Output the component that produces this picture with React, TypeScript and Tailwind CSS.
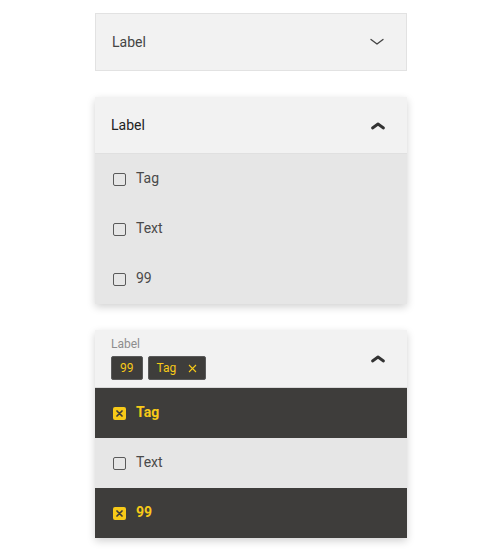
import React from "react";

const ChevronDown = () => (
  <svg width="14" height="8" viewBox="0 0 14 8" fill="none">
    <path d="M1 1.5 L7 6 L13 1.5" stroke="#444" strokeWidth="1.3" strokeLinecap="round" strokeLinejoin="round" />
  </svg>
);

const ChevronUpBold = () => (
  <svg width="16" height="9" viewBox="0 0 16 9" fill="none">
    <path d="M2.5 7 L8 3 L13.5 7" stroke="#333" strokeWidth="2.8" strokeLinecap="round" strokeLinejoin="round" />
  </svg>
);

const Box = ({ checked }: { checked?: boolean }) =>
  checked ? (
    <span className="flex h-[13px] w-[13px] items-center justify-center rounded-[2px] bg-[#f7ca18]">
      <svg width="7" height="7" viewBox="0 0 7 7">
        <path d="M1 1 L6 6 M6 1 L1 6" stroke="#3d3c3a" strokeWidth="1.7" strokeLinecap="round" />
      </svg>
    </span>
  ) : (
    <span className="block h-[13px] w-[13px] rounded-[2px] border-[1.5px] border-[#5a5a5a]" />
  );

const Row = ({ text, checked }: { text: string; checked?: boolean }) => (
  <div
    className={
      checked
        ? "flex h-[50px] items-center gap-[10px] bg-[#3e3d3b] pl-[18px] text-[14px] font-bold text-[#f7ca18]"
        : "flex h-[50px] items-center gap-[10px] bg-[#e6e6e6] pl-[18px] text-[14px] text-[#4a4a4a]"
    }
  >
    <Box checked={checked} />
    <span className="-mt-[2px]">{text}</span>
  </div>
);

export default function App() {
  return (
    <div
      className="flex min-h-[556px] w-full flex-col items-center bg-white pt-[13px]"
      style={{ fontFamily: "Roboto, 'Noto Sans', sans-serif" }}
    >
      <div className="flex w-[312px] flex-col gap-[26px]">
        {/* closed */}
        <div className="flex h-[58px] items-center justify-between border border-[#e2e2e2] bg-[#f2f2f2] pl-[16px] pr-[22px]">
          <span className="text-[14px] text-[#444]">Label</span>
          <ChevronDown />
        </div>

        {/* open */}
        <div className="shadow-[0_3px_8px_rgba(0,0,0,0.18)]">
          <div className="flex h-[57px] items-center justify-between border-b border-[#e0e0e0] bg-[#f2f2f2] pl-[16px] pr-[21px]">
            <span className="text-[14px] text-[#222]">Label</span>
            <ChevronUpBold />
          </div>
          <Row text="Tag" />
          <Row text="Text" />
          <Row text="99" />
        </div>

        {/* selected */}
        <div className="shadow-[0_3px_8px_rgba(0,0,0,0.18)]">
          <div className="flex h-[58px] items-center justify-between border-b border-[#d8d8d8] bg-[#f2f2f2] pl-[16px] pr-[21px]">
            <div className="flex flex-col">
              <span className="text-[12px] leading-[14px] text-[#8d8d8d]">Label</span>
              <div className="mt-[5px] flex gap-[5px]">
                <span className="flex h-[24px] items-center rounded-[2px] border border-[#5a5a5a] bg-[#3e3d3b] px-[8px] text-[12px] text-[#f7ca18]">
                  99
                </span>
                <span className="flex h-[24px] items-center gap-[12px] rounded-[2px] border border-[#5a5a5a] bg-[#3e3d3b] pl-[8px] pr-[8px] text-[12px] text-[#f7ca18]">
                  Tag
                  <svg width="9" height="9" viewBox="0 0 9 9">
                    <path d="M1 1 L8 8 M8 1 L1 8" stroke="#f7ca18" strokeWidth="1.1" />
                  </svg>
                </span>
              </div>
            </div>
            <ChevronUpBold />
          </div>
          <Row text="Tag" checked />
          <Row text="Text" />
          <Row text="99" checked />
        </div>
      </div>
    </div>
  );
}
